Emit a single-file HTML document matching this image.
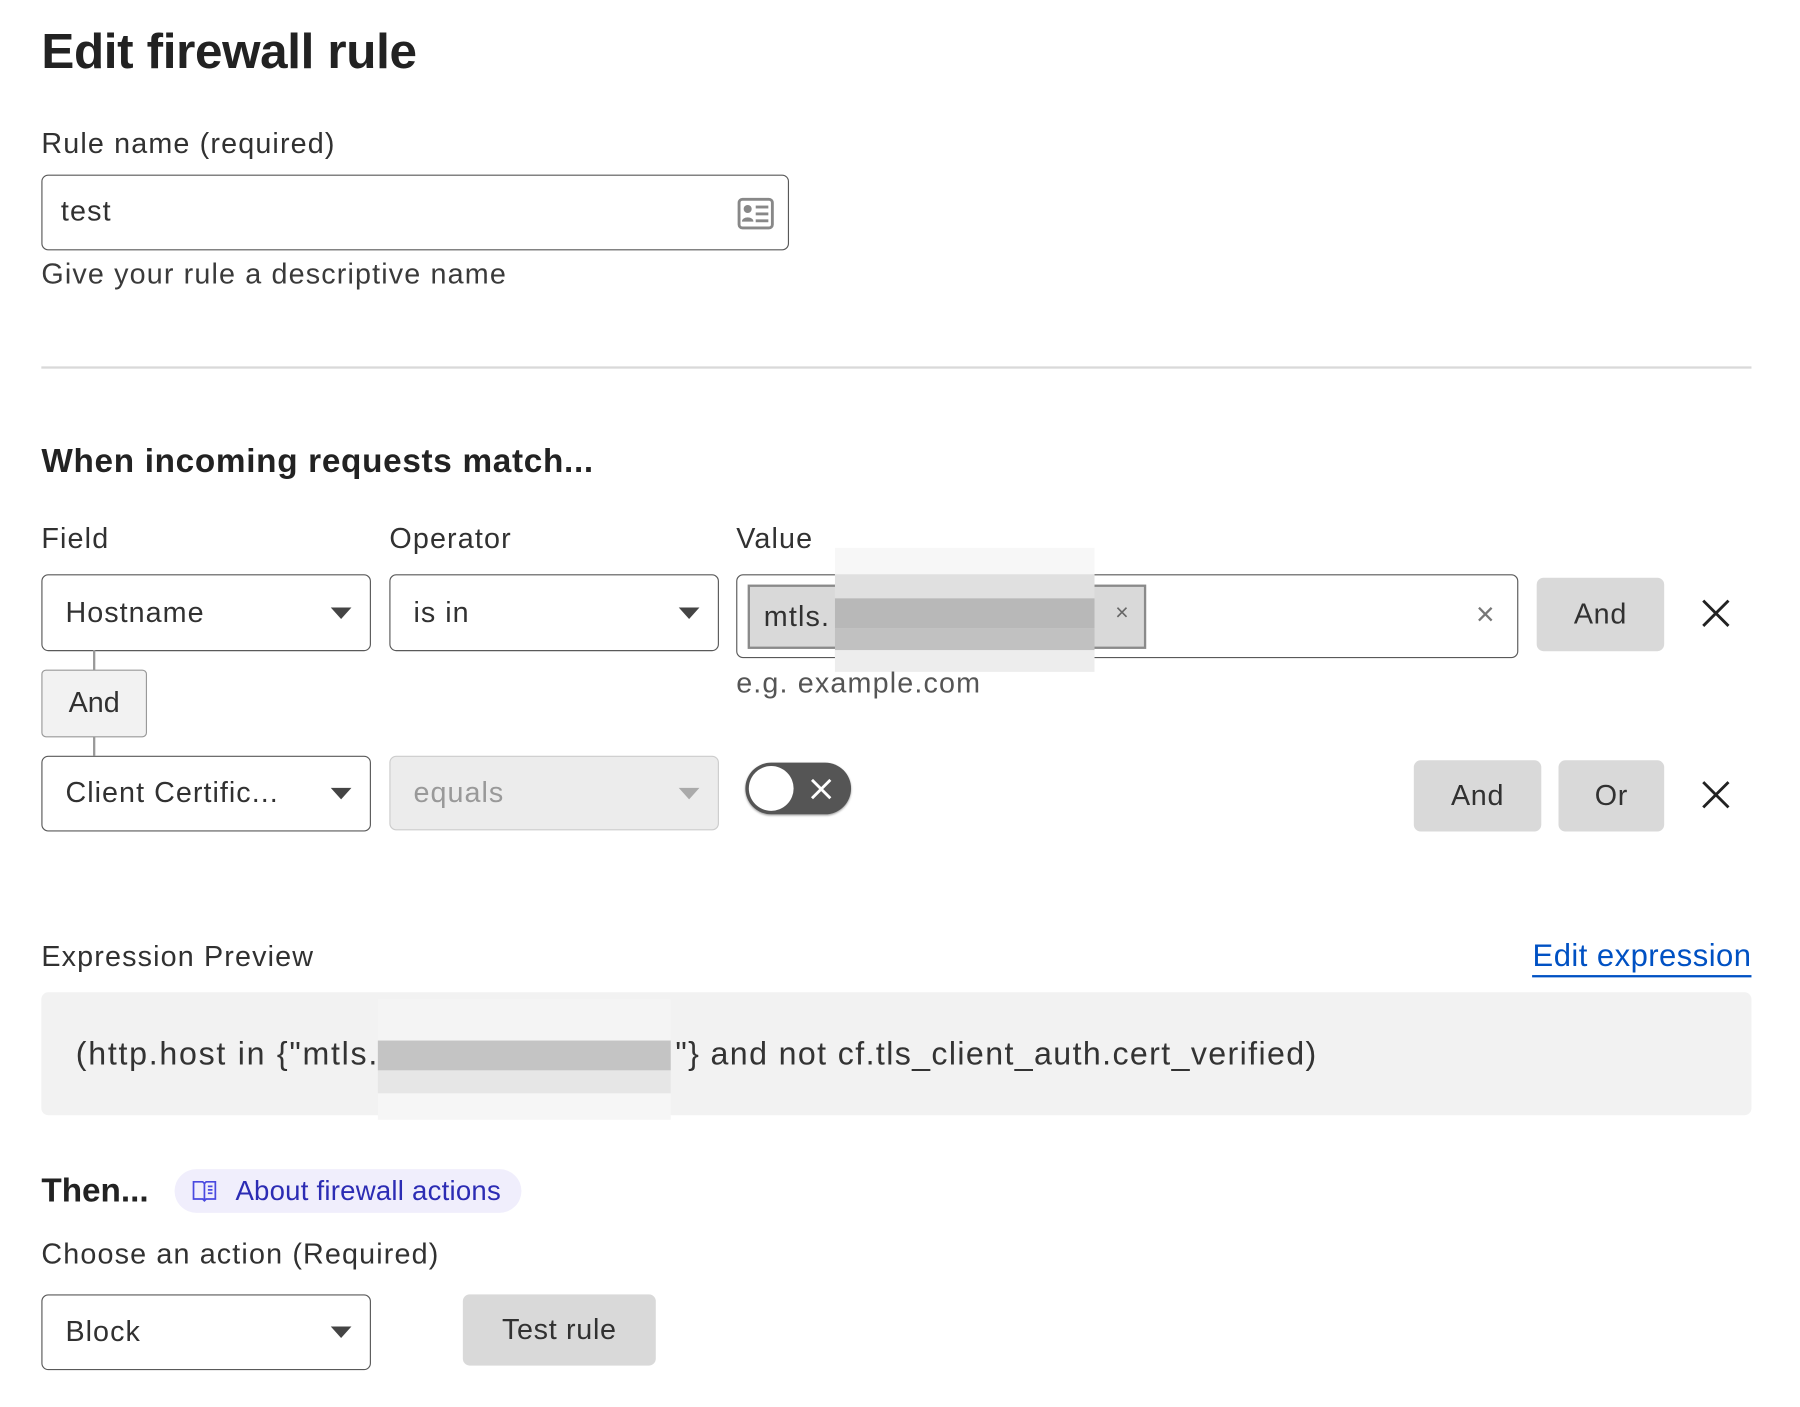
<!DOCTYPE html>
<html><head><meta charset="utf-8"><style>
html,body{margin:0;padding:0;background:#fff;overflow:hidden}
body{width:1800px;height:1406px}
#w{position:absolute;left:0;top:0;width:1570px;height:1225px;transform:scale(1.1485);transform-origin:0 0;font-family:"Liberation Sans",Arial,sans-serif;color:#313131}
.a{position:absolute;white-space:nowrap}
.t{font-size:25px;line-height:30px;letter-spacing:1px}
.box{position:absolute;box-sizing:border-box;border:1.5px solid #595959;border-radius:6px;background:#fff}
.sel .tx{position:absolute;left:20px;top:50%;transform:translateY(-50%);font-size:25px;letter-spacing:0.9px}
.caret{position:absolute;right:16px;top:50%;margin-top:-5px;width:0;height:0;border-left:9px solid transparent;border-right:9px solid transparent;border-top:10px solid #444}
.btn{position:absolute;background:#d9d9d9;border-radius:6px;font-size:25px;letter-spacing:0.6px;display:flex;align-items:center;justify-content:center;color:#313131}
.pix{position:absolute;background:#c2c2c2}
.ex{font-size:28px;line-height:36px;color:#333;letter-spacing:1.2px}
</style></head><body><div id="w">
<div class="a" style="left:36px;top:20px;font-size:43px;font-weight:bold;line-height:50px;color:#222;letter-spacing:-0.3px">Edit firewall rule</div>
<div class="a t" style="left:36px;top:110px">Rule name (required)</div>
<div class="box" style="left:36px;top:152px;width:651px;height:66px"><div class="a" style="left:16px;top:17px;font-size:25px;letter-spacing:1px">test</div>
<svg class="a" style="left:605px;top:19px" width="32" height="28" viewBox="0 0 32 28"><rect x="1.5" y="1.5" width="29" height="25" rx="3" fill="none" stroke="#888" stroke-width="2.5"/><circle cx="9" cy="10" r="3.5" fill="#888"/><path d="M4 21c0-5 10-5 10 0z" fill="#888"/><rect x="16" y="7" width="11" height="2.5" fill="#888"/><rect x="16" y="13" width="11" height="2.5" fill="#888"/><rect x="16" y="19" width="11" height="2.5" fill="#888"/></svg></div>
<div class="a t" style="left:36px;top:224px;color:#3a3a3a">Give your rule a descriptive name</div>
<div class="a" style="left:36px;top:319px;width:1489px;height:2px;background:#d9d9d9"></div>
<div class="a" style="left:36px;top:384px;font-size:29px;font-weight:bold;line-height:36px;color:#222;letter-spacing:0.6px">When incoming requests match...</div>
<div class="a t" style="left:36px;top:454px">Field</div>
<div class="a t" style="left:339px;top:454px">Operator</div>
<div class="a t" style="left:641px;top:454px">Value</div>
<div class="box sel" style="left:36px;top:500px;width:287px;height:67px"><span class="tx">Hostname</span><span class="caret"></span></div>
<div class="box sel" style="left:339px;top:500px;width:287px;height:67px"><span class="tx">is in</span><span class="caret"></span></div>
<div class="box" style="left:641px;top:500px;width:681px;height:73px">
<div class="a" style="left:9px;top:8px;width:347px;height:56px;box-sizing:border-box;border:2px solid #8a8a8a;background:#d9d9d9"><span class="a" style="left:12px;top:12px;font-size:25px;letter-spacing:1px">mtls.</span><span class="a" style="left:318px;top:12px;font-size:20px;color:#666">×</span></div>
<span class="a" style="left:643px;top:18px;font-size:28px;color:#777;font-weight:300">×</span></div>
<div class="pix" style="left:727px;top:477px;width:226px;height:24px;background:#f7f7f7"></div>
<div class="pix" style="left:727px;top:500px;width:226px;height:26px;background:#e0e0e0"></div>
<div class="pix" style="left:727px;top:521px;width:226px;height:26px;background:#b8b8b8"></div>
<div class="pix" style="left:727px;top:547px;width:226px;height:26px;background:#c1c1c1"></div>
<div class="pix" style="left:727px;top:566px;width:226px;height:19px;background:#ededed"></div>
<div class="btn" style="left:1338px;top:503px;width:111px;height:64px">And</div>
<svg class="a" style="left:1480px;top:520px" width="28" height="28"><path d="M3 3L25 25M25 3L3 25" stroke="#222" stroke-width="2.5"/></svg>
<div class="a t" style="left:641px;top:580px;color:#555">e.g. example.com</div>
<div class="a" style="left:81px;top:566px;width:1.5px;height:92px;background:#999"></div>
<div class="a" style="left:36px;top:583px;width:92px;height:59px;box-sizing:border-box;border:1.5px solid #999;border-radius:4px;background:#f2f2f2;font-size:25px;display:flex;align-items:center;justify-content:center">And</div>
<div class="box sel" style="left:36px;top:658px;width:287px;height:66px"><span class="tx">Client Certific...</span><span class="caret"></span></div>
<div class="box sel" style="left:339px;top:658px;width:287px;height:65px;background:#ececec;border-color:#ccc"><span class="tx" style="color:#999">equals</span><span class="caret" style="border-top-color:#aaa"></span></div>
<div class="a" style="left:649px;top:664px;width:92px;height:45px;border-radius:23px;background:#555;box-shadow:0 1px 2px #999"><div class="a" style="left:3px;top:3px;width:39px;height:39px;border-radius:50%;background:#fff"></div><svg class="a" style="left:56px;top:13px" width="20" height="20"><path d="M2 2L18 18M18 2L2 18" stroke="#fff" stroke-width="2.5"/></svg></div>
<div class="btn" style="left:1231px;top:662px;width:111px;height:62px">And</div>
<div class="btn" style="left:1357px;top:662px;width:92px;height:62px">Or</div>
<svg class="a" style="left:1480px;top:678px" width="28" height="28"><path d="M3 3L25 25M25 3L3 25" stroke="#222" stroke-width="2.5"/></svg>
<div class="a t" style="left:36px;top:818px">Expression Preview</div>
<div class="a" style="right:45px;top:816px;font-size:27px;line-height:32px;color:#0051c3;border-bottom:2.5px solid #0051c3;padding-bottom:1px;letter-spacing:0.4px">Edit expression</div>
<div class="a" style="left:36px;top:864px;width:1489px;height:107px;background:#f2f2f2;border-radius:6px"></div>
<div class="a ex" style="left:66px;top:900px;letter-spacing:1.5px">(http.host in {"mtls.</div>
<div class="a ex" style="left:588px;top:900px">"} and not cf.tls_client_auth.cert_verified)</div>
<div class="pix" style="left:329px;top:870px;width:255px;height:36px;background:#f4f4f4"></div>
<div class="pix" style="left:329px;top:906px;width:255px;height:26px;background:#c4c4c4"></div>
<div class="pix" style="left:329px;top:932px;width:255px;height:20px;background:#e6e6e6"></div>
<div class="pix" style="left:329px;top:952px;width:255px;height:23px;background:#f6f6f6"></div>
<div class="a" style="left:36px;top:1019px;font-size:29px;font-weight:bold;line-height:36px;color:#222">Then...</div>
<div class="a" style="left:152px;top:1018px;width:302px;height:38px;border-radius:19px;background:#f0eefc"></div>
<svg class="a" style="left:167px;top:1027px" width="22" height="20" viewBox="0 0 22 20"><path d="M1.5 2h8l1.5 1.5L12.5 2h8v15h-8l-1.5 1.5L9.5 17h-8z M11 3.5v15" fill="none" stroke="#4a4ae0" stroke-width="1.5"/><path d="M14 6h4M14 9h4M14 12h4" stroke="#4a4ae0" stroke-width="1.5"/></svg>
<div class="a" style="left:205px;top:1023px;font-size:24px;line-height:30px;color:#2c2cb4;letter-spacing:0.2px">About firewall actions</div>
<div class="a t" style="left:36px;top:1077px">Choose an action (Required)</div>
<div class="box sel" style="left:36px;top:1127px;width:287px;height:66px"><span class="tx">Block</span><span class="caret"></span></div>
<div class="btn" style="left:403px;top:1127px;width:168px;height:62px">Test rule</div>
</div></body></html>
